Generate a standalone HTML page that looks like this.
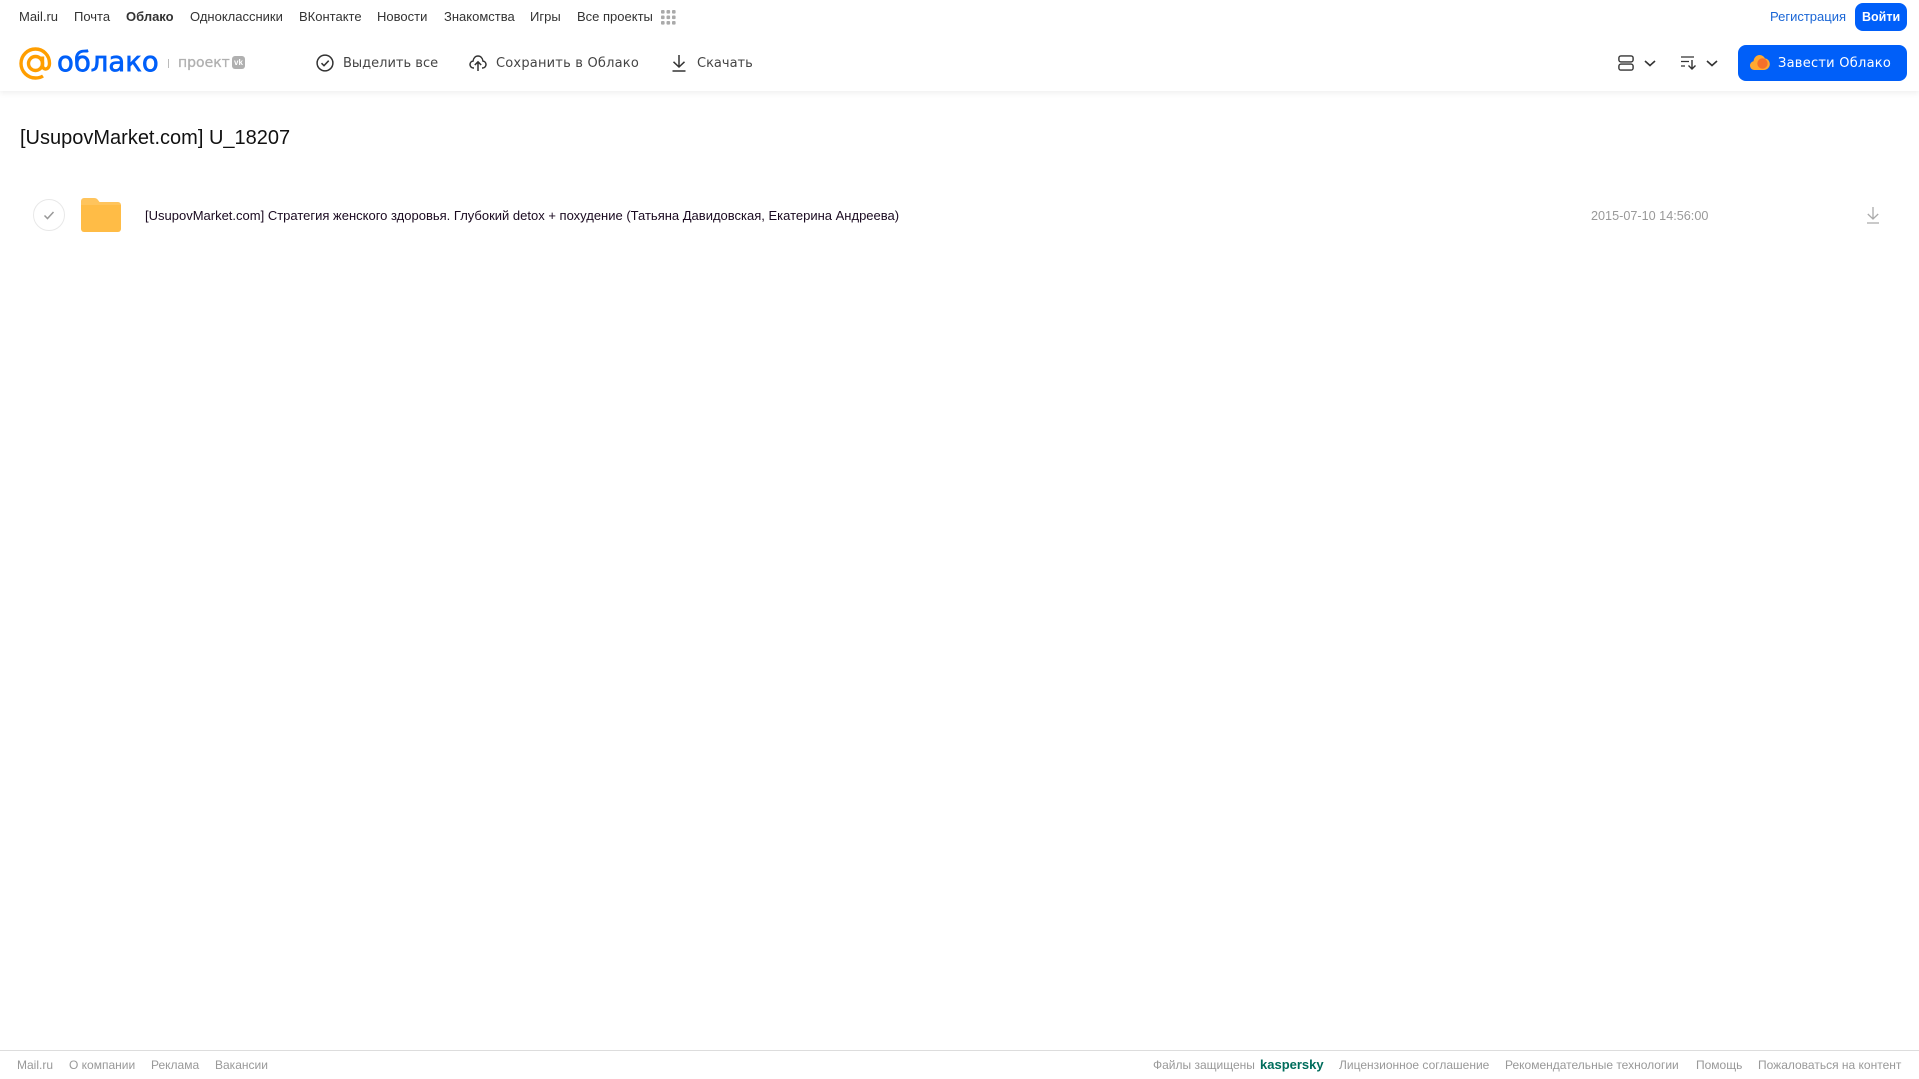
<!DOCTYPE html>
<html lang="ru"><head><meta charset="utf-8"><title>Облако</title>
<style>
html,body{margin:0;padding:0;background:#fff;width:1919px;height:1079px;overflow:hidden;font-family:"Liberation Sans",Arial,sans-serif}
.t{position:absolute;white-space:nowrap;line-height:16px}
.n{font-size:13px;top:9px;color:#333}
.b{top:56px;color:#444;font-family:"DejaVu Sans","Liberation Sans",sans-serif;font-size:13px}
.f{font-size:12px;top:1057px;color:#999}
svg{position:absolute;overflow:visible}
</style></head><body>
<div style="position:absolute;left:0;top:0;width:1919px;height:91px;background:#fff;box-shadow:0 2px 6px rgba(0,0,0,.07)"></div>
<span class="t n" style="left:19px">Mail.ru</span>
<span class="t n" style="left:74px">Почта</span>
<span class="t n" style="left:126px;font-weight:bold">Облако</span>
<span class="t n" style="left:190px">Одноклассники</span>
<span class="t n" style="left:299px">ВКонтакте</span>
<span class="t n" style="left:377px">Новости</span>
<span class="t n" style="left:444px">Знакомства</span>
<span class="t n" style="left:530px">Игры</span>
<span class="t n" style="left:577px">Все проекты</span>
<svg style="left:661px;top:10px" width="15" height="15" fill="#aaa"><rect x="0" y="0" width="3.6" height="3.6" rx="1"/><rect x="5.5" y="0" width="3.6" height="3.6" rx="1"/><rect x="11" y="0" width="3.6" height="3.6" rx="1"/><rect x="0" y="5.5" width="3.6" height="3.6" rx="1"/><rect x="5.5" y="5.5" width="3.6" height="3.6" rx="1"/><rect x="11" y="5.5" width="3.6" height="3.6" rx="1"/><rect x="0" y="11" width="3.6" height="3.6" rx="1"/><rect x="5.5" y="11" width="3.6" height="3.6" rx="1"/><rect x="11" y="11" width="3.6" height="3.6" rx="1"/></svg>
<span class="t n" style="left:1770px;color:#1a66d6">Регистрация</span>
<div style="position:absolute;left:1855px;top:3px;width:52px;height:28px;background:#005ff9;border-radius:8px"></div>
<span class="t n" style="left:1862px;color:#fff;font-weight:bold;font-size:12.5px">Войти</span>

<svg style="left:19px;top:47px" width="33" height="33" viewBox="0 0 33 33" fill="none" stroke="#ff9e00" stroke-width="3.4"><circle cx="16.5" cy="16.5" r="7"/><path d="M23.5 9.5v9c0 5 7 5 7-2.200C30.500 8 24 2 16.500 2 8.500 2 2 8.500 2 16.500S8.500 31 16.500 31c3 0 5.500-.7 7.500-2"/></svg>
<span class="t" style="left:57px;top:44px;line-height:36px;font-family:'DejaVu Sans',sans-serif;font-size:27.500px;-webkit-text-stroke:.7px #005ff9;color:#005ff9">облако</span>
<div style="position:absolute;left:168px;top:59px;width:1px;height:9px;background:#bbb"></div>
<span class="t" style="left:178px;top:55px;font-family:'DejaVu Sans',sans-serif;font-size:14px;-webkit-text-stroke:.3px #b0b0b0;color:#b0b0b0">проект</span>
<div style="position:absolute;left:232px;top:56px;width:13px;height:13px;border-radius:3px;background:#b0b0b0;color:#fff;font:bold 8px/13px 'Liberation Sans',sans-serif;text-align:center">vk</div>

<svg style="left:316px;top:54px" width="18" height="18" fill="none" stroke="#333" stroke-width="1.500"><circle cx="9" cy="9" r="7.900"/><path d="M5.500 9.200l2.500 2.500 4.700-5"/></svg>
<span class="t b" style="left:343px">Выделить все</span>
<svg style="left:469px;top:54px" width="18" height="18" fill="none" stroke="#333" stroke-width="1.500"><path d="M5 14H4.500C2.500 14 1 12.500 1 10.500 1 8.700 2.300 7.300 4 7.100 4.500 4 6.500 2 9 2s4.500 2 5 5.100c1.700.2 3 1.600 3 3.400 0 2-1.500 3.500-3.500 3.500H13"/><path d="M9 17V8M5.800 11L9 7.800 12.200 11"/></svg>
<span class="t b" style="left:496px;letter-spacing:.2px">Сохранить в Облако</span>
<svg style="left:671px;top:54px" width="16" height="18" fill="none" stroke="#333" stroke-width="1.500"><path d="M8 1v12M2.500 7.800L8 13l5.500-5.200M1.500 17h13"/></svg>
<span class="t b" style="left:697px">Скачать</span>

<svg style="left:1618px;top:55px" width="16" height="16" fill="none" stroke="#333" stroke-width="1.400"><rect x=".9" y=".9" width="14.200" height="6" rx="2"/><rect x=".9" y="9.100" width="14.200" height="6" rx="2"/></svg>
<svg style="left:1644px;top:60px" width="12" height="7" fill="none" stroke="#333" stroke-width="1.600"><path d="M1 1l5 4.500L11 1"/></svg>
<svg style="left:1681px;top:56px" width="16" height="14" fill="none" stroke="#333" stroke-width="1.200"><path d="M0 1h13M0 5.500h8M0 10h4"/><path d="M11 4v9M7.500 9.500l3.500 3.500 3.500-3.500" stroke-width="1.400"/></svg>
<svg style="left:1706px;top:60px" width="12" height="7" fill="none" stroke="#333" stroke-width="1.600"><path d="M1 1l5 4.500L11 1"/></svg>
<div style="position:absolute;left:1738px;top:45px;width:169px;height:36px;background:#005ff9;border-radius:8px"></div>
<svg style="left:1750px;top:54px" width="20" height="17"><path d="M4.500 16C2 16 0 14 0 11.500 0 9.500 1.500 7.500 3.500 7.200 4 3.500 6.500 1 9.500 1c2.500 0 4.500 1.500 5.500 3.500 2.800.2 4.800 2.700 4.800 5.500 0 3.300-2.700 6-6 6z" fill="#ffa930"/><circle cx="12.500" cy="9.500" r="5.200" fill="#f4702a"/></svg>
<span class="t b" style="left:1778px;color:#fff;letter-spacing:.25px">Завести Облако</span>

<span class="t" style="left:20px;top:126px;line-height:25px;font-size:20px;color:#111">[UsupovMarket.com] U_18207</span>

<svg style="left:33px;top:199px" width="32" height="32" fill="none"><circle cx="16" cy="16" r="15.500" stroke="#e8e8e8"/><path d="M11.500 16.500l3 3 6-6.500" stroke="#999" stroke-width="1.500"/></svg>
<svg style="left:81px;top:198px" width="40" height="34"><path d="M3 0h10c2 0 3 .8 4 2l1.500 2H37a3 3 0 0 1 3 3v6H0V3a3 3 0 0 1 3-3z" fill="#ffc45c"/><path d="M0 7h40v24a3 3 0 0 1-3 3H3a3 3 0 0 1-3-3z" fill="#ffbc46"/></svg>
<span class="t" style="left:145px;top:208px;font-size:13px;color:#1a0a20">[UsupovMarket.com] Стратегия женского здоровья. Глубокий detox + похудение (Татьяна Давидовская, Екатерина Андреева)</span>
<span class="t" style="left:1591px;top:208px;font-size:12.650px;color:#999">2015-07-10 14:56:00</span>
<svg style="left:1866px;top:207px" width="14" height="17" fill="none" stroke="#aaa" stroke-width="1.300"><path d="M7 0v12M1.800 7L7 12l5.200-5M1 16h12"/></svg>

<div style="position:absolute;left:0;top:1050px;width:1919px;height:1px;background:#ddd"></div>
<span class="t f" style="left:17px">Mail.ru</span>
<span class="t f" style="left:69px">О компании</span>
<span class="t f" style="left:151px">Реклама</span>
<span class="t f" style="left:215px">Вакансии</span>
<span class="t f" style="left:1153px">Файлы защищены</span>
<span class="t f" style="left:1260px;color:#006d5c;font-weight:bold;font-size:13px">kaspersky</span>
<span class="t f" style="left:1339px">Лицензионное соглашение</span>
<span class="t f" style="left:1505px">Рекомендательные технологии</span>
<span class="t f" style="left:1696px">Помощь</span>
<span class="t f" style="left:1758px">Пожаловаться на контент</span>
</body></html>
